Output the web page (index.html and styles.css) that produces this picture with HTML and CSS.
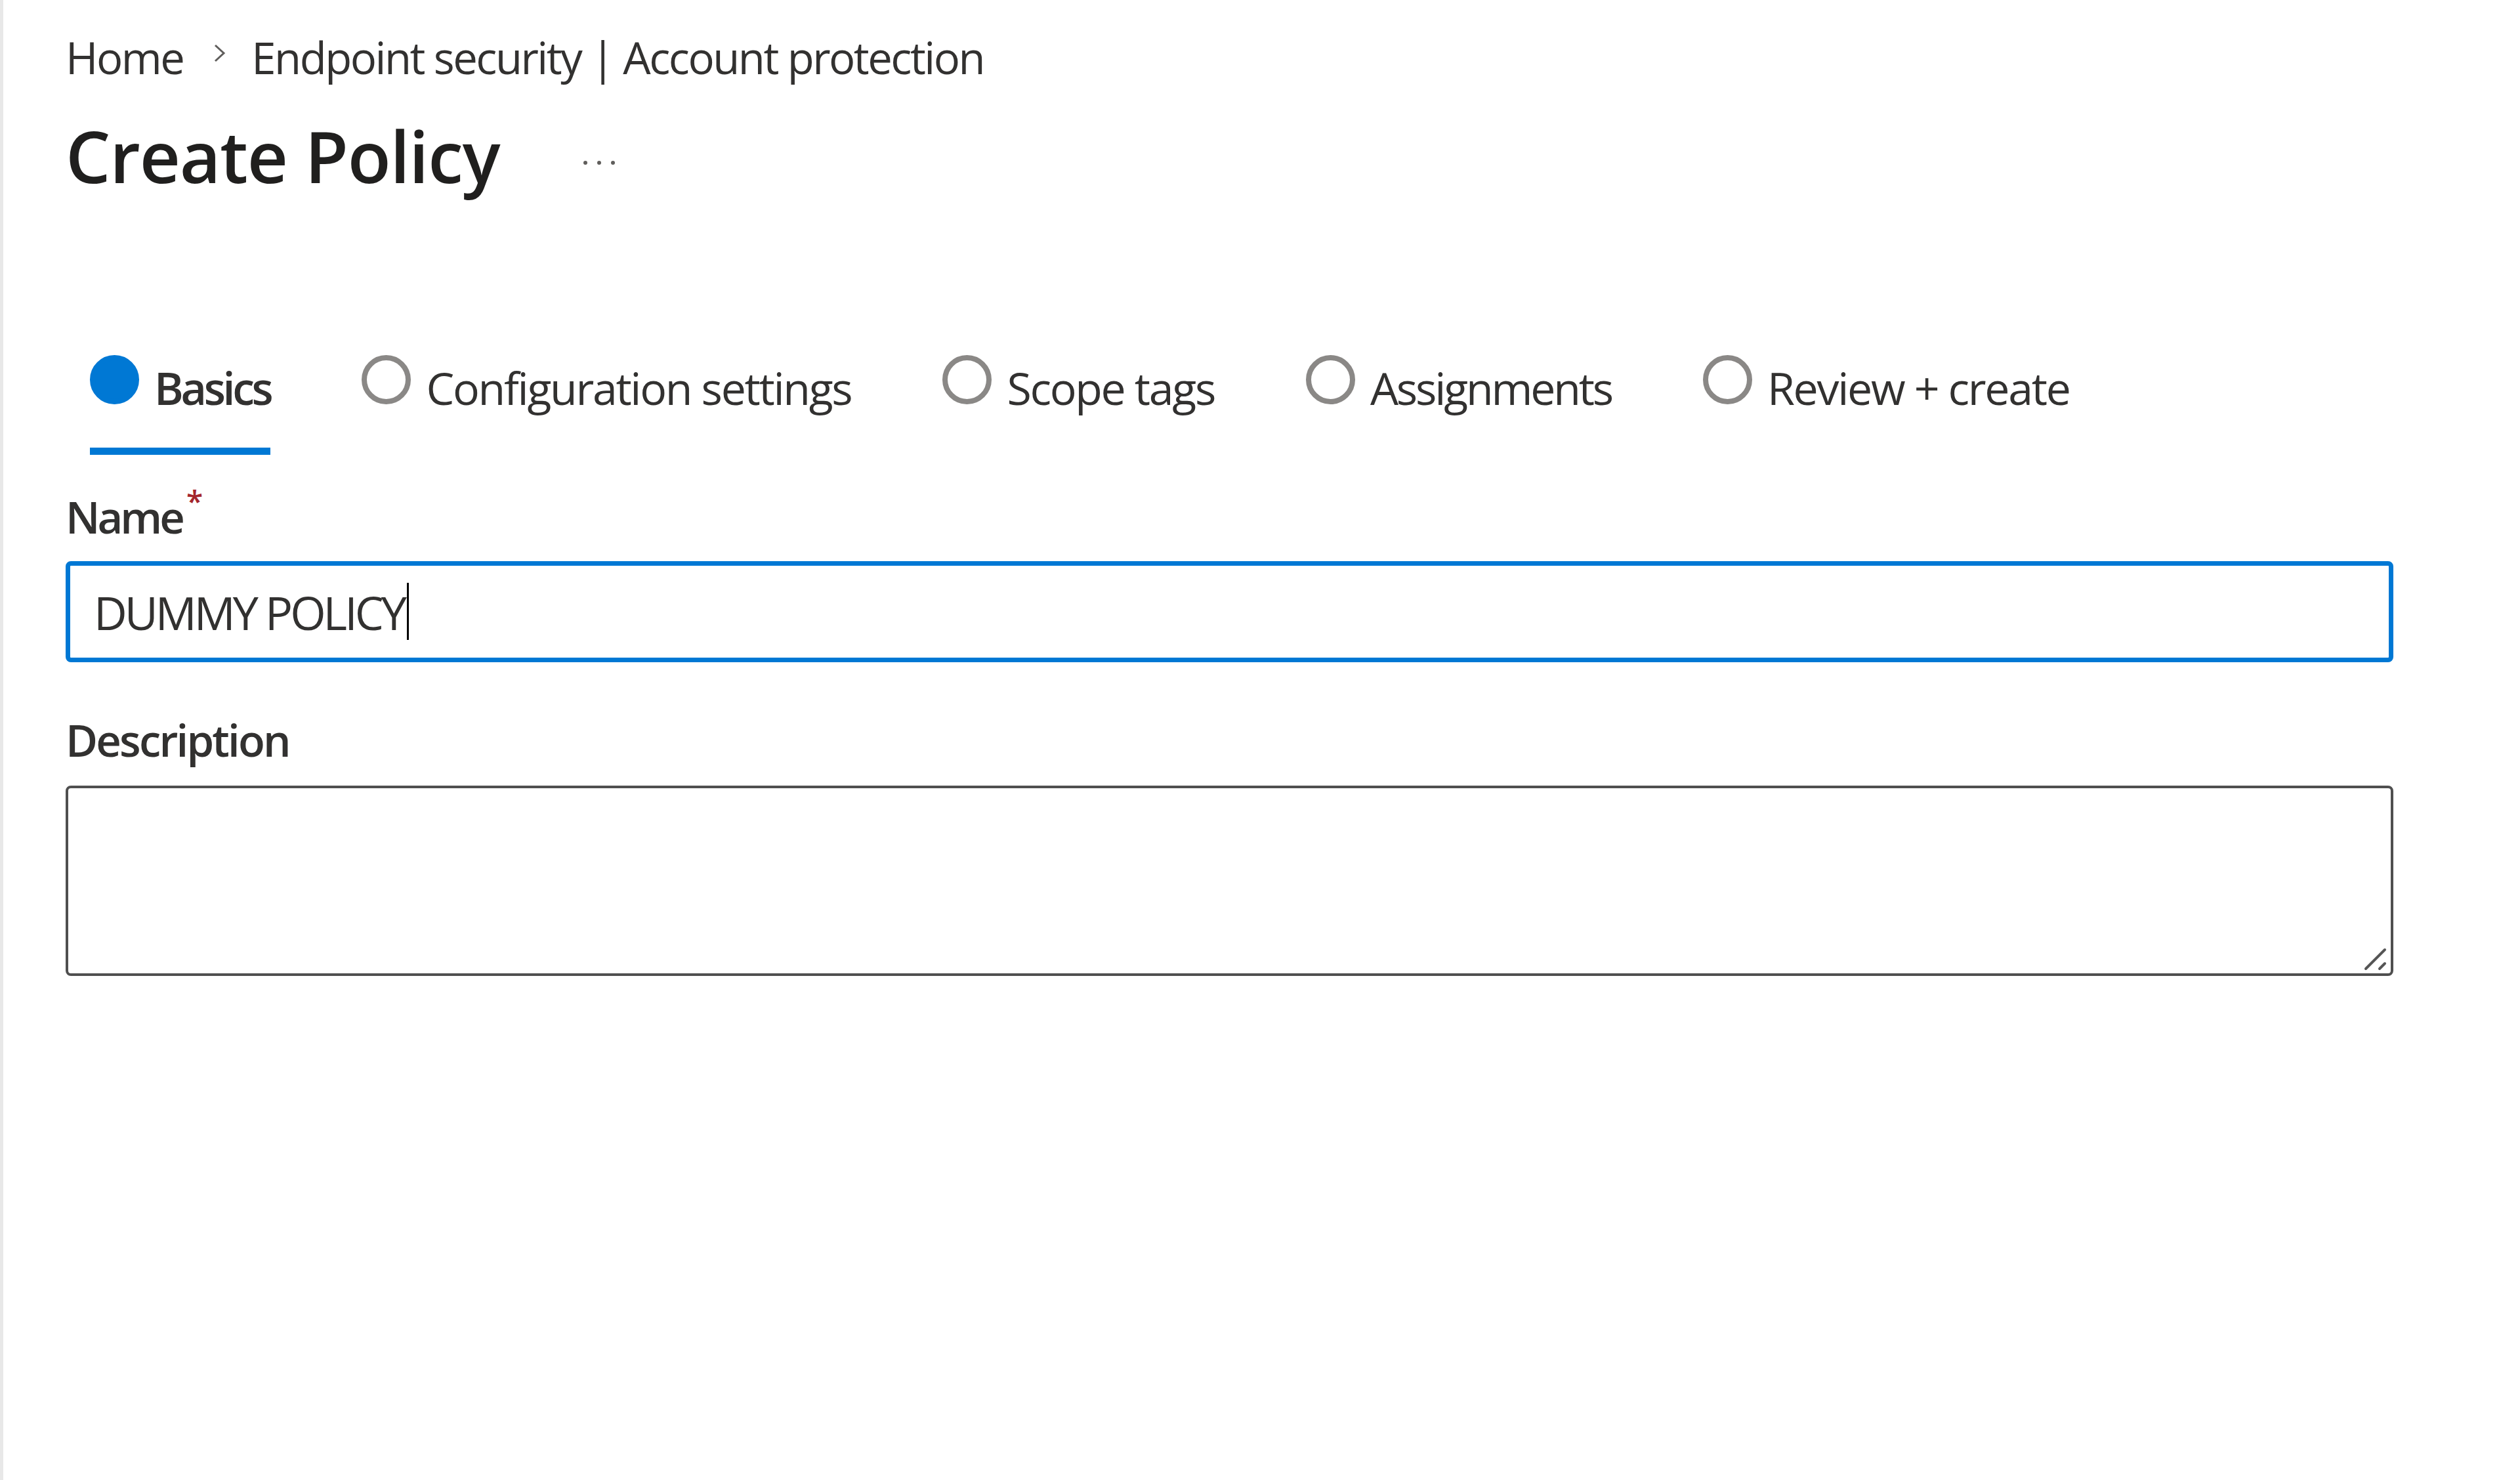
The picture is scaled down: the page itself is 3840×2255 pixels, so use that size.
FILE: index.html
```html
<!DOCTYPE html>
<html lang="en">
<head>
<meta charset="utf-8">
<title>Create Policy</title>
<link rel="stylesheet" href="styles.css">
</head>
<body>
<div class="page">
  <nav class="crumbs">
    <span class="crumb">Home</span>
    <svg class="chev" width="20" height="28" viewBox="0 0 20 28"><path d="M3 2 L16 14 L3 26" fill="none" stroke="#605e5c" stroke-width="3"/></svg>
    <span class="crumb">Endpoint security | Account protection</span>
  </nav>
  <div class="titlebar">
    <h1 class="title">Create Policy</h1>
    <svg class="more" width="52" height="10" viewBox="0 0 52 10"><circle cx="5" cy="5" r="3" fill="#605e5c"/><circle cx="26" cy="5" r="3" fill="#605e5c"/><circle cx="47" cy="5" r="3" fill="#605e5c"/></svg>
  </div>
  <div class="tabs">
    <div class="tab active"><span class="dot"></span><span class="label">Basics</span></div>
    <div class="tab"><span class="dot"></span><span class="label">Configuration settings</span></div>
    <div class="tab"><span class="dot"></span><span class="label">Scope tags</span></div>
    <div class="tab"><span class="dot"></span><span class="label tight">Assignments</span></div>
    <div class="tab"><span class="dot"></span><span class="label">Review + create</span></div>
  </div>
  <div class="form">
    <div class="field-label">Name<span class="req">*</span></div>
    <div class="input focused"><span class="value">DUMMY POLICY</span><span class="caret"></span></div>
    <div class="field-label desc-label">Description</div>
    <div class="textarea">
      <svg class="grip" width="36" height="36" viewBox="0 0 36 36"><path d="M4 33 L33 4 M25 33 L33 25" fill="none" stroke="#555" stroke-width="4" stroke-linecap="round"/></svg>
    </div>
  </div>
</div>
</body>
</html>
```
FILE: styles.css
```css
html, body {
  margin: 0;
  padding: 0;
  background: #ffffff;
  min-height: 100%;
}
body {
  font-family: "Open Sans", "Noto Sans", "Liberation Sans", sans-serif;
  color: #323130;
}
.page {
  box-sizing: border-box;
  min-height: 2255px;
  border-left: 5px solid #e8e8e8;
  padding: 47px 193px 0 95px;
}
.crumbs {
  display: flex;
  align-items: flex-start;
  height: 80px;
  line-height: 80px;
  font-size: 67px;
}
.crumb {
  letter-spacing: -2.5px;
}
.chev {
  margin: 20px 38px 0 46px;
}
.titlebar {
  display: flex;
  align-items: center;
  margin-top: 46px;
  height: 130px;
}
.title {
  margin: 0;
  font-size: 108px;
  line-height: 130px;
  font-weight: 600;
  color: #201f1e;
  letter-spacing: -1.2px;
}
.more {
  margin-left: 126px;
  margin-top: 20px;
}
.tabs {
  display: flex;
  gap: 139px;
  margin-top: 238px;
  margin-left: 37px;
}
.tab {
  display: flex;
  align-items: flex-start;
  gap: 23px;
  padding-bottom: 62px;
}
.tab.active {
  padding-bottom: 51px;
  border-bottom: 11px solid #0078d4;
}
.dot {
  box-sizing: border-box;
  width: 75px;
  height: 75px;
  border-radius: 50%;
  border: 8px solid #8a8886;
  flex: none;
}
.tab.active .dot {
  background: #0078d4;
  border-color: #0078d4;
}
.label {
  margin-top: 10px;
  font-size: 68px;
  line-height: 80px;
  white-space: nowrap;
  letter-spacing: -2.3px;
}
.label.tight {
  letter-spacing: -3.2px;
}
.tab.active .label {
  font-weight: 600;
  letter-spacing: -4.3px;
}
.form {
  display: flex;
  flex-direction: column;
}
.field-label {
  margin-top: 54px;
  font-size: 67px;
  line-height: 80px;
  font-weight: 600;
  letter-spacing: -4px;
}
.req {
  display: inline-block;
  margin-left: 6px;
  font-size: 46px;
  line-height: 46px;
  vertical-align: top;
  color: #a4262c;
  position: relative;
  top: -8px;
}
.input {
  box-sizing: border-box;
  margin-top: 28px;
  height: 154px;
  border: 7px solid #0078d4;
  border-radius: 8px;
  padding: 3px 0 0 36px;
  font-size: 70px;
  line-height: 137px;
  white-space: nowrap;
}
.value {
  letter-spacing: -4px;
}
.caret {
  display: inline-block;
  width: 3px;
  height: 87px;
  background: #000;
  vertical-align: -15px;
  margin-left: 4px;
}
.desc-label {
  margin-top: 78px;
  letter-spacing: -2.8px;
}
.textarea {
  box-sizing: border-box;
  margin-top: 30px;
  height: 290px;
  border: 4px solid #4f4f4f;
  border-radius: 8px;
  display: flex;
  justify-content: flex-end;
  align-items: flex-end;
}
.grip {
  margin: 0 6px 4px 0;
}
```
